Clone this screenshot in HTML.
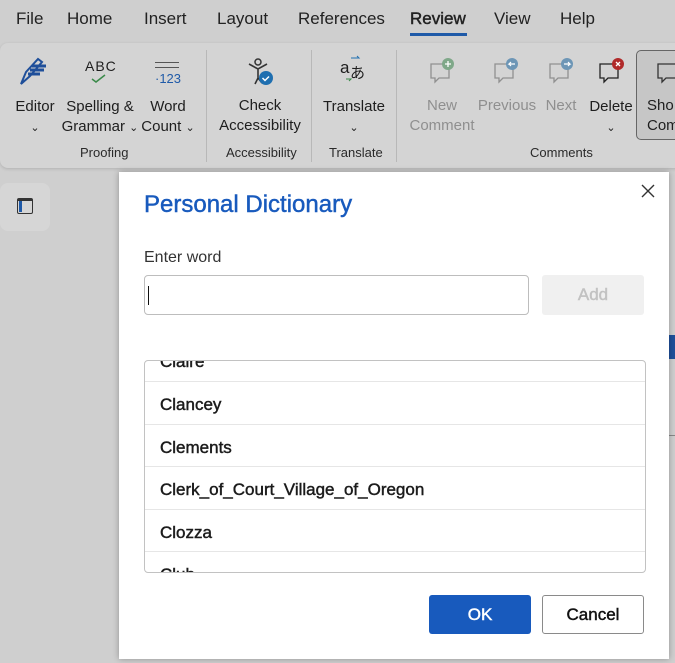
<!DOCTYPE html>
<html><head><meta charset="utf-8"><style>
*{margin:0;padding:0;box-sizing:border-box}
body{width:675px;height:663px;overflow:hidden;background:#cfcfcf;font-family:"Liberation Sans",Arial,sans-serif;position:relative;color:#1e1e1e}
.a{position:absolute;white-space:nowrap}
.tab{top:9px;font-size:17px;color:#222}
.rib{left:0;top:43px;width:690px;height:125px;background:#d4d4d4;border-radius:8px;box-shadow:0 1px 3px rgba(0,0,0,.15)}
.lbl{font-size:15px;text-align:center;line-height:20px;color:#1e1e1e}
.grp{font-size:13px;color:#2a2a2a;top:145px}
.sep{width:1px;background:#b8b8b8;top:50px;height:112px}
.dis{color:#8f8f8f}
.dlg{left:119px;top:172px;width:550px;height:487px;background:#fff;box-shadow:0 0 6px rgba(0,0,0,.3)}
.sb{font-weight:normal;-webkit-text-stroke:0.45px currentColor}
.row{position:absolute;left:0;width:100%;height:42px;border-top:1px solid #e6e6e6;font-size:17px;color:#1b1b1b;padding-left:15px;line-height:46px;font-weight:normal;-webkit-text-stroke:0.45px #1b1b1b}
</style></head><body>
<span class="a tab" style="left:16px">File</span>
<span class="a tab" style="left:67px">Home</span>
<span class="a tab" style="left:144px">Insert</span>
<span class="a tab" style="left:217px">Layout</span>
<span class="a tab" style="left:298px">References</span>
<span class="a tab sb" style="left:410px">Review</span>
<div class="a" style="left:410px;top:33px;width:57px;height:3px;background:#1f5aa8"></div>
<span class="a tab" style="left:494px">View</span>
<span class="a tab" style="left:560px">Help</span>

<div class="a rib"></div>
<svg class="a" style="left:18px;top:56px" width="34" height="30" viewBox="0 0 34 30"><path d="M3 28 L8 16 L20 3 L24 6 L12 20 Z" fill="none" stroke="#1f4f9a" stroke-width="2"/><path d="M14 10h14M12 14h14M10 18h12" stroke="#1f4f9a" stroke-width="3"/></svg>
<span class="a" style="left:85px;top:58px;font-size:14px;letter-spacing:1px">ABC</span>
<svg class="a" style="left:90px;top:74px" width="18" height="10"><path d="M2 5l4 3 9-7" stroke="#3b8a4a" stroke-width="1.5" fill="none"/></svg>
<div class="a" style="left:155px;top:62px;width:24px;height:1px;background:#555"></div>
<div class="a" style="left:155px;top:67px;width:24px;height:1px;background:#555"></div>
<span class="a" style="left:155px;top:71px;font-size:13px;color:#1f5aa8">·123</span>
<svg class="a" style="left:246px;top:58px" width="30" height="30"><circle cx="12" cy="4" r="3" fill="none" stroke="#333" stroke-width="1.5"/><path d="M3 6 L12 11 L21 6 M12 11 V20 L9 26 M12 20 L16 25" stroke="#333" stroke-width="1.6" fill="none"/><circle cx="20" cy="20" r="7" fill="#1f6fb0"/><path d="M16.5 20l2.5 2.5 4-4" stroke="#fff" stroke-width="1.5" fill="none"/></svg>
<span class="a" style="left:340px;top:58px;font-size:17px">a</span><span class="a" style="left:350px;top:62px;font-size:15px;font-family:'Noto Sans CJK JP',sans-serif">あ</span>
<svg class="a" style="left:340px;top:54px" width="30" height="30"><path d="M11 4h8l-2-2" stroke="#1f6fb0" fill="none"/><path d="M6 25h5l-2 2" stroke="#3b8a4a" fill="none"/></svg>
<svg class="a" style="left:428px;top:56px" width="30" height="32"><path d="M3 8h18v14H11l-4 4v-4H3Z" fill="none" stroke="#909090" stroke-width="1.3"/><circle cx="20" cy="8" r="6" fill="#7fa889"/><path d="M20 5v6M17 8h6" stroke="#fff" stroke-width="1.3"/></svg>
<svg class="a" style="left:492px;top:56px" width="30" height="32"><path d="M3 8h18v14H11l-4 4v-4H3Z" fill="none" stroke="#909090" stroke-width="1.3"/><circle cx="20" cy="8" r="6" fill="#6d96b6"/><path d="M23 8h-6l2-2M17 8l2 2" stroke="#fff" stroke-width="1.2" fill="none"/></svg>
<svg class="a" style="left:547px;top:56px" width="30" height="32"><path d="M3 8h18v14H11l-4 4v-4H3Z" fill="none" stroke="#909090" stroke-width="1.3"/><circle cx="20" cy="8" r="6" fill="#6d96b6"/><path d="M17 8h6l-2-2M23 8l-2 2" stroke="#fff" stroke-width="1.2" fill="none"/></svg>
<svg class="a" style="left:597px;top:56px" width="30" height="32"><path d="M3 8h18v14H11l-4 4v-4H3Z" fill="none" stroke="#222" stroke-width="1.3"/><circle cx="21" cy="8" r="6" fill="#b02a2a"/><path d="M19 6l4 4M23 6l-4 4" stroke="#fff" stroke-width="1.3"/></svg>
<div class="a" style="left:636px;top:50px;width:60px;height:90px;border:1px solid #666;border-radius:5px;background:#c6c6c6"></div>
<svg class="a" style="left:655px;top:56px" width="30" height="32"><path d="M3 8h18v14H11l-4 4v-4H3Z" fill="none" stroke="#333" stroke-width="1.3"/></svg>

<div class="a lbl" style="left:10px;top:97px;width:50px">Editor<br><span style="font-size:11px">⌄</span></div>
<div class="a lbl" style="left:60px;top:97px;width:80px">Spelling &amp;<br>Grammar <span style="font-size:11px">⌄</span></div>
<div class="a lbl" style="left:140px;top:97px;width:56px">Word<br>Count <span style="font-size:11px">⌄</span></div>
<div class="a lbl" style="left:214px;top:96px;width:92px">Check<br>Accessibility</div>
<div class="a lbl" style="left:318px;top:97px;width:72px">Translate<br><span style="font-size:11px">⌄</span></div>
<div class="a lbl dis" style="left:400px;top:96px;width:84px">New<br>Comment</div>
<div class="a lbl dis" style="left:476px;top:96px;width:62px">Previous</div>
<div class="a lbl dis" style="left:540px;top:96px;width:42px">Next</div>
<div class="a lbl" style="left:586px;top:97px;width:50px">Delete<br><span style="font-size:11px">⌄</span></div>
<div class="a lbl" style="left:638px;top:96px;width:60px;text-align:left;padding-left:9px">Sho<br>Comm</div>
<span class="a grp" style="left:80px">Proofing</span>
<span class="a grp" style="left:226px">Accessibility</span>
<span class="a grp" style="left:329px">Translate</span>
<span class="a grp" style="left:530px">Comments</span>
<div class="a sep" style="left:206px"></div>
<div class="a sep" style="left:311px"></div>
<div class="a sep" style="left:396px"></div>

<div class="a" style="left:0;top:183px;width:50px;height:48px;background:#d6d6d6;border-radius:8px"></div>
<div class="a" style="left:17px;top:198px;width:16px;height:16px;border:1.5px solid #333;border-radius:2px;border-top-width:3px"></div>
<div class="a" style="left:19px;top:201px;width:3px;height:11px;background:#1f5aa8"></div>

<div class="a" style="left:669px;top:172px;width:6px;height:491px;background:#cfcfcf"></div>
<div class="a" style="left:669px;top:335px;width:6px;height:24px;background:#1f4f9a"></div>
<div class="a" style="left:669px;top:435px;width:6px;height:1px;background:#888"></div>

<div class="a dlg">
 <svg class="a" style="left:522px;top:12px" width="14" height="14"><path d="M1 1l12 12M13 1L1 13" stroke="#333" stroke-width="1.4"/></svg>
 <div class="a sb" style="left:25px;top:19px;font-size:24px;color:#185abd">Personal Dictionary</div>
 <div class="a" style="left:25px;top:77px;font-size:16px;color:#333">Enter word</div>
 <div class="a" style="left:25px;top:103px;width:385px;height:40px;border:1px solid #bdbdbd;border-radius:4px"></div>
 <div class="a" style="left:29px;top:114px;width:1px;height:19px;background:#111"></div>
 <div class="a sb" style="left:423px;top:103px;width:102px;height:40px;background:#f0f0f0;border-radius:3px;text-align:center;line-height:40px;font-size:17px;color:#c2c2c2">Add</div>
 <div class="a" style="left:25px;top:188px;width:502px;height:213px;border:1px solid #c2c2c2;border-radius:4px;overflow:hidden">
  <div class="row" style="top:-22px;border-top:none">Claire</div>
  <div class="row" style="top:20px">Clancey</div>
  <div class="row" style="top:63px">Clements</div>
  <div class="row" style="top:105px">Clerk_of_Court_Village_of_Oregon</div>
  <div class="row" style="top:148px">Clozza</div>
  <div class="row" style="top:190px">Club</div>
 </div>
 <div class="a sb" style="left:310px;top:423px;width:102px;height:39px;background:#185abd;border-radius:3px;color:#fff;text-align:center;line-height:39px;font-size:17px">OK</div>
 <div class="a sb" style="left:423px;top:423px;width:102px;height:39px;border:1px solid #8a8a8a;border-radius:3px;text-align:center;line-height:37px;font-size:17px;color:#111">Cancel</div>
</div>
</body></html>
